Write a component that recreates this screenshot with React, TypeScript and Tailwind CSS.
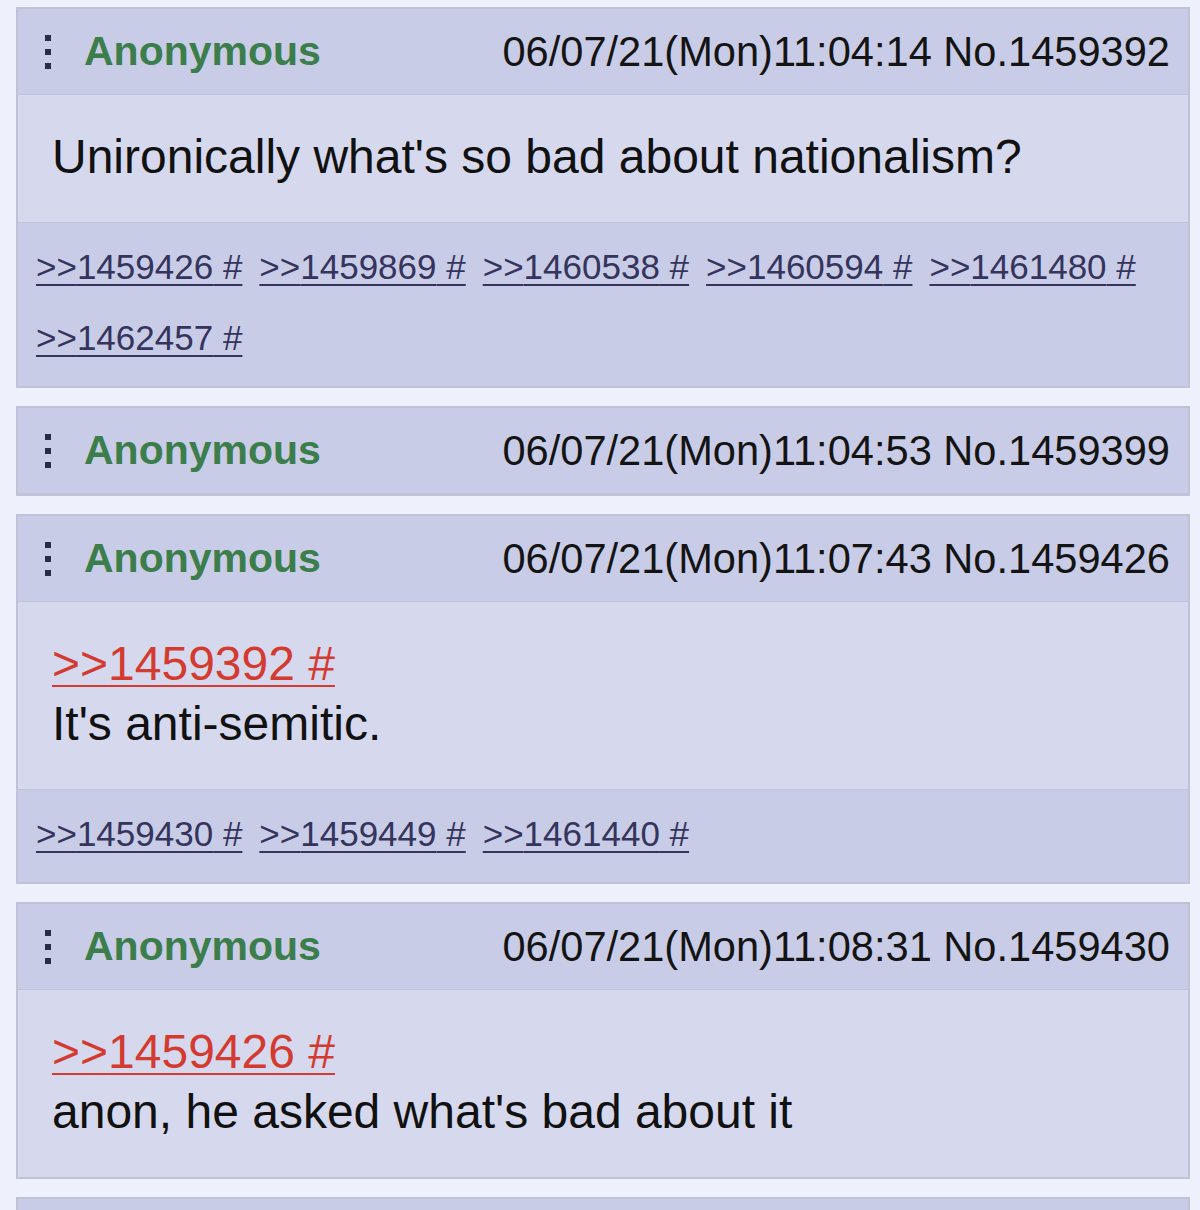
import React from 'react';

type Post = {
  no: string;
  time: string;
  quote?: string;
  text?: string;
  replies?: string[];
};

const posts: Post[] = [
  {
    no: '1459392',
    time: '06/07/21(Mon)11:04:14',
    text: "Unironically what's so bad about nationalism?",
    replies: ['1459426', '1459869', '1460538', '1460594', '1461480', '1462457'],
  },
  { no: '1459399', time: '06/07/21(Mon)11:04:53' },
  {
    no: '1459426',
    time: '06/07/21(Mon)11:07:43',
    quote: '1459392',
    text: "It's anti-semitic.",
    replies: ['1459430', '1459449', '1461440'],
  },
  {
    no: '1459430',
    time: '06/07/21(Mon)11:08:31',
    quote: '1459426',
    text: "anon, he asked what's bad about it",
  },
];

// vertical "more" handle, three little squares
function Handle() {
  return (
    <div className="flex flex-col gap-[8px]">
      <span className="block w-[6px] h-[6px] bg-[#2b2b4b]" />
      <span className="block w-[6px] h-[6px] bg-[#2b2b4b]" />
      <span className="block w-[6px] h-[6px] bg-[#2b2b4b]" />
    </div>
  );
}

function PostCard({ post }: { post: Post }) {
  return (
    <div className="border-2 border-[#bfc3d8] bg-[#d6d9ee]">
      <div className="h-[86px] flex items-center justify-between pl-[27px] pr-[18px] bg-[#c9cce6] border-b border-[#bec2db]">
        <div className="flex items-center gap-[33px]">
          <Handle />
          <span className="text-[41px] font-bold text-[#3b7d4b] leading-none">Anonymous</span>
        </div>
        <span className="text-[41.6px] text-[#141414] leading-none">
          {post.time} No.{post.no}
        </span>
      </div>
      {post.text && (
        <div className="px-[34px] pt-[32px] pb-[35px] text-[#111]">
          {post.quote && (
            <div className="text-[48px] leading-[60px]">
              <a className="text-[#d33b30] underline decoration-2 underline-offset-[5px]">
                &gt;&gt;{post.quote} #
              </a>
            </div>
          )}
          <div className="text-[48px] leading-[60px]">{post.text}</div>
        </div>
      )}
      {post.replies && (
        <div className="flex flex-wrap gap-x-[17px] gap-y-[31px] px-[18px] pt-[24px] pb-[28px] bg-[#c9cce6] border-t border-[#c0c4dc]">
          {post.replies.map((r) => (
            <a
              key={r}
              className="text-[35px] leading-[40px] text-[#34345c] underline decoration-2 underline-offset-[5px]"
            >
              &gt;&gt;{r} #
            </a>
          ))}
        </div>
      )}
    </div>
  );
}

export default function App() {
  return (
    <div
      className="h-[1210px] overflow-hidden bg-[#eef1fb] pl-[16px] pr-[10px] pt-[7px] flex flex-col gap-[18px]"
      style={{ fontFamily: '"Liberation Sans", Arial, Helvetica, sans-serif' }}
    >
      {posts.map((p) => (
        <PostCard key={p.no} post={p} />
      ))}
      <div className="border-2 border-[#bfc3d8] bg-[#c9cce6] h-[85px] shrink-0" />
    </div>
  );
}
